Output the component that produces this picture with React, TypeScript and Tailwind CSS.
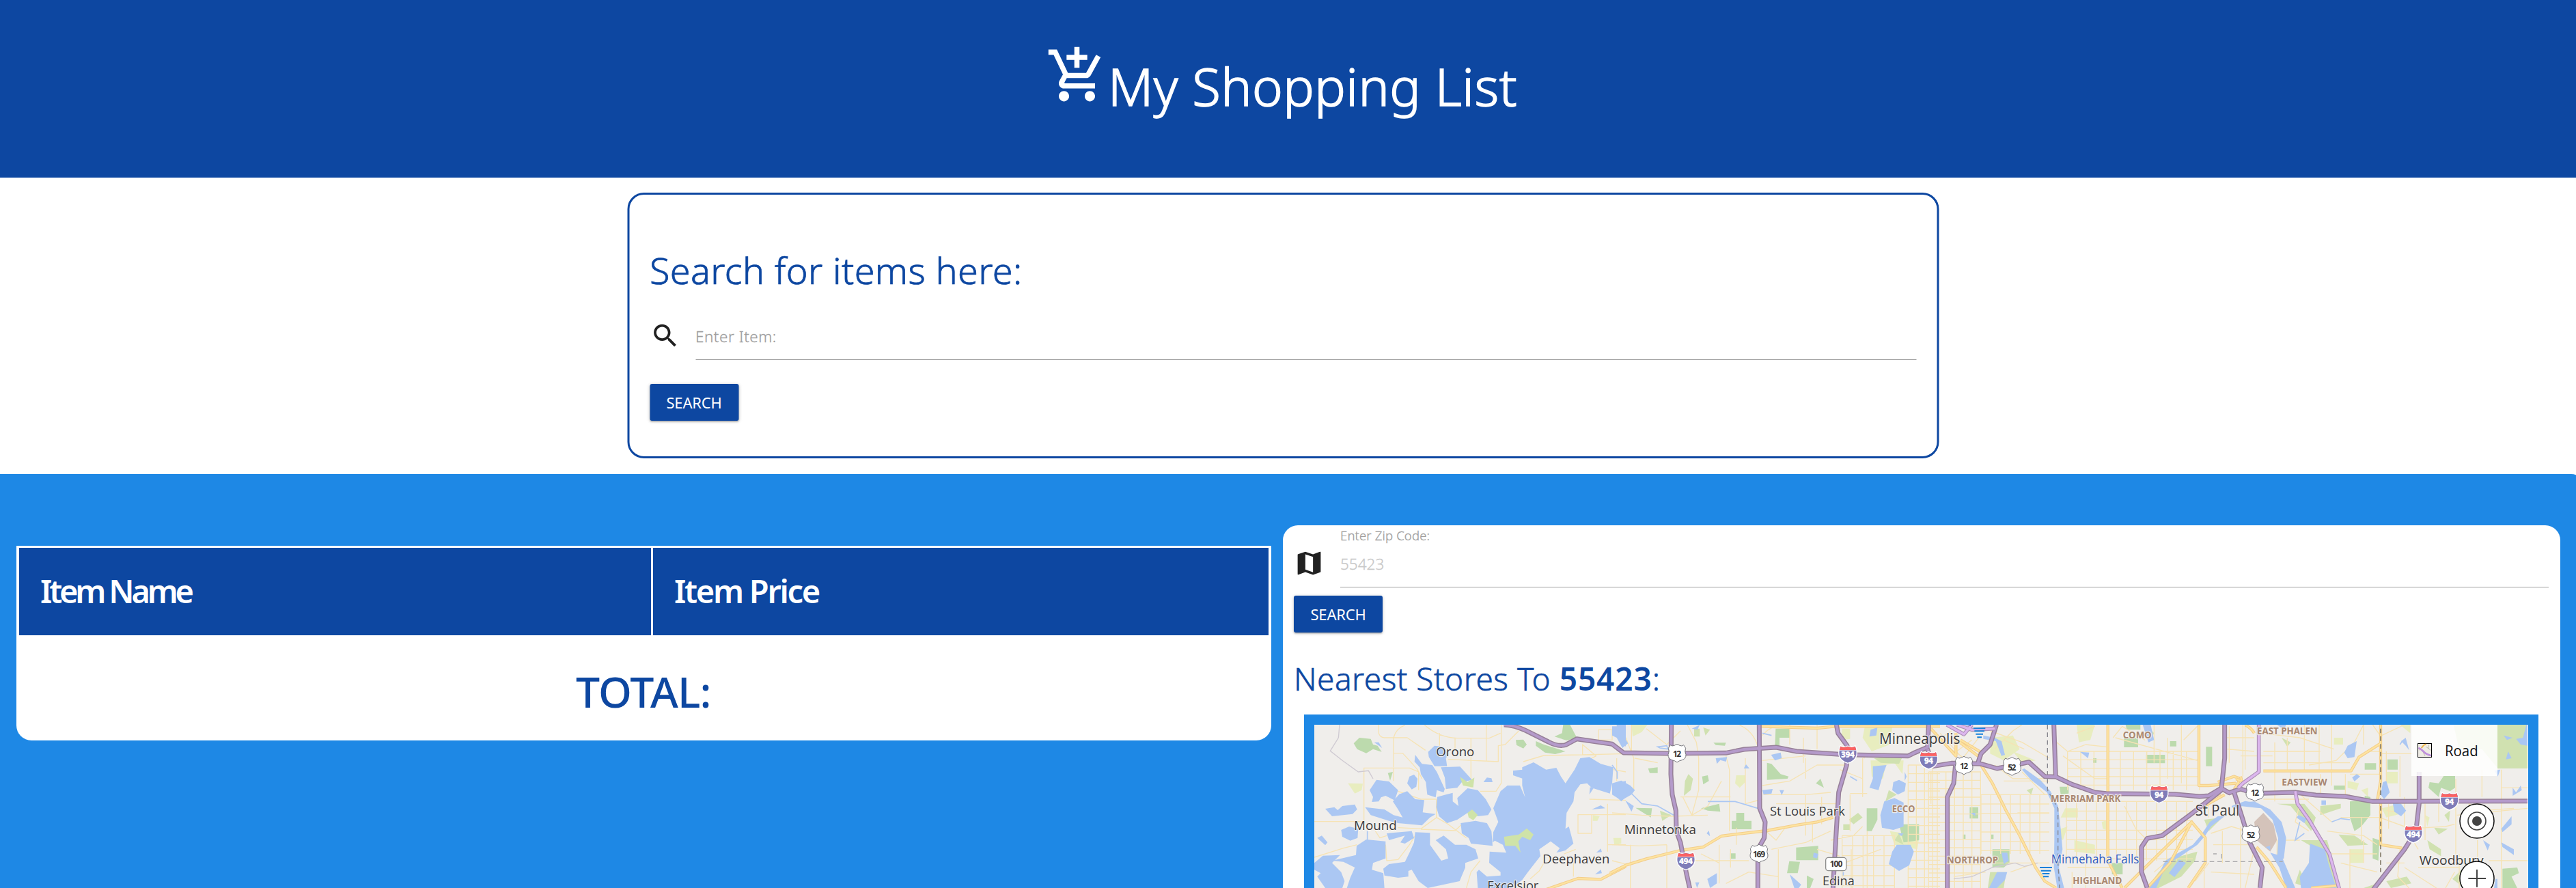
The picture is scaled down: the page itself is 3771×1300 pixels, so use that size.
import React from "react";

const FONT = "font-['Noto_Sans','Open_Sans',sans-serif]";

function grid(x0: number, x1: number, dx: number, y0: number, y1: number, dy: number) {
  let d = "";
  for (let x = x0; x <= x1; x += dx) d += `M${x} ${y0}V${y1}`;
  for (let y = y0; y <= y1; y += dy) d += `M${x0} ${y}H${x1}`;
  return d;
}

type Tile = {
  x: number;
  pale: string;
  green: string;
  lime: string;
  minor: string;
  water: string;
  streams: string;
  yellow: string;
  gray?: string;
};

const tiles: Tile[] = [
  {
    x: 0,
    pale: "M220 350L285 352 280 380 250 395ZM1295 490L1325 495 1315 515 1295 515ZM1390 600L1415 590 1410 620 1390 620Z",
    green:
      "M245 175L270 150 320 155 330 180 350 185 368 212 330 200 300 218 260 200ZM1127 145L1160 130 1165 93 1195 93 1225 150 1180 162ZM1045 165L1080 180 1175 210 1130 222 1085 215 1045 185ZM957 160L990 158 1005 180 990 197 960 182ZM395 305l22 -5 -12 38Z",
    lime: "",
    minor:
      "M355 93V130Q360 148 380 150H480L560 205M420 280V150Q430 110 470 95M555 93Q620 150 700 152H840L890 130M622 130V185M690 150V200M760 150V370M827 93V255M893 93V350L870 385H800M420 218H460L490 250 525 290 545 330M290 520V283H490L530 300V380M72 518H290M420 283V340M650 375L720 340M660 245L880 255V185L910 180 970 120M440 385L540 420H608V500L660 530 740 590M440 545L540 550 610 500M540 552L690 558 720 530M72 675L200 635 260 620M385 620L390 690 440 685 490 620 515 580M340 560L360 590 390 580M990 290V350M990 255L1080 228 1250 225 1440 220M1250 225V180L1310 230 1270 250M1320 115H1380V160H1320ZM1400 240V340M1385 290L1440 300M1230 488H1290V570H1230ZM1290 488H1440M1360 440V650M1280 420L1440 425M1360 620H1440M740 810L760 740 800 690M1020 770L1060 735 1080 700M1210 700V760M1170 660L1220 640",
    water:
      "M600 185L640 190 660 225 650 240 655 275 600 275 575 235 572 212ZM515 225L545 265 590 270 610 300 645 375 640 390 610 380 605 412 568 400 562 345 540 310 535 280 512 255ZM628 280L712 277 765 335 720 345 700 370 650 375 645 325ZM612 410L650 400 680 392 680 430 705 450 700 415 745 372 790 380 825 420 850 465 835 490 790 495 745 480 700 510 655 525 620 495 608 455ZM490 320L510 312 525 330 520 365 500 377 480 350ZM315 380L345 335 400 342 440 380 425 425 385 405 365 412 355 430 325 432 330 410ZM417 430L445 398 480 385 515 420 555 424 548 478 605 485 580 500 545 535 440 525 400 515 320 490 295 455 380 465 420 490 460 500 440 465ZM120 462L160 455 175 468 195 450 250 443 260 465 240 485 150 495ZM190 555L225 540 265 550 262 590 230 602 195 585ZM85 590l20 -10 25 30 -10 12ZM715 525L780 515 830 525 850 560 855 625 760 615 750 590 720 570ZM985 280L1035 258 1090 290 1135 282 1155 320 1175 350 1215 290 1240 240 1280 235 1330 265 1385 280 1380 350 1370 395 1290 370 1270 350 1240 355 1215 390 1210 430 1180 480 1175 550 1190 540 1210 615 1175 645 1135 655 1150 635 1110 605 1060 640 1065 670 1010 740 985 775 940 810 790 810 785 740 795 730 830 760 890 755 890 740 840 700 842 650 915 655 900 620 865 602 855 610 858 565 880 520 858 460 890 385 920 360 975 360 998 412 985 360ZM945 295L985 290 988 330 945 315ZM815 345L830 325 850 328 855 345ZM1385 350L1440 340 1440 410 1420 430 1385 395ZM515 565L580 568 580 620 630 690 660 680 650 640 605 600 640 580 690 620 740 620 780 640 792 680 735 700 735 720 710 780 570 810 530 780 500 730 485 735 485 760 440 765 380 755 375 725 400 705 470 695 490 655 510 610ZM258 625L300 597 385 605 385 680 330 700 325 730 375 745 380 810 215 810 230 765 250 720 200 695 150 690 255 665ZM72 700L110 668 185 665 150 700 190 740 205 780 195 810 120 810 85 760 100 745 72 730ZM390 570L500 560 510 590 470 615 450 610 470 580 400 600ZM1290 465L1330 447 1350 460ZM1305 750l25 -20 5 15ZM1310 655l20 -18 5 15ZM1280 400l18 -28 -15 -5ZM1400 93h40v95l-20 -10 -18 -40ZM335 170l20 0 15 25Z",
    streams: "M305 560V600M530 270L560 300",
    yellow: "M1080 820L1230 768 1330 772 1440 715",
    gray: "M183 93L178 150 142 208 195 250 265 300 310 295 330 330",
  },
  {
    x: 1380,
    pale:
      "M85 93H155L130 125 90 145ZM545 315H585V345L560 370 540 350ZM1010 110H1045V155L1005 160ZM1135 250L1280 250 1275 310 1240 260 1200 270 1190 330 1140 320ZM1220 560L1350 580 1340 640 1240 620ZM5 590H40V615L10 620ZM1110 100L1230 105 1220 180 1140 210 1100 150Z",
    green:
      "M718 110H780V150H735V190H715ZM680 260L700 265 740 310 775 320 770 330 680 335ZM525 515H545V480H580V515H612V552H525ZM808 632L905 625V688H808ZM778 692L825 695 815 745 768 745ZM1118 460H1165V510L1140 560H1118ZM158 285L200 280 200 305 165 305ZM390 460L470 440 475 475 420 470ZM103 458L175 460 170 500ZM395 320L420 315 425 340 400 355ZM815 370M895 350L915 330 930 370ZM518 658H542V682H518ZM855 755L885 770 870 810 855 810ZM1260 530H1348V600L1280 610ZM445 172L500 172 495 185 455 182Z",
    lime:
      "M320 340L335 310 355 330 345 380 315 405ZM210 470L260 490 220 515ZM1040 510L1080 480 1100 500 1060 530ZM1015 530H1045V555H1015ZM1150 240L1280 225 1260 265 1180 260ZM1240 600L1260 570 1280 620ZM360 110H385V145H360ZM400 105L430 115 410 140ZM1215 380L1250 400 1200 430Z",
    minor:
      "M0 110L60 150 95 240V380M85 93V215M330 93L370 170 380 240V380M150 110L240 180 300 120M560 95Q620 120 640 190M660 140Q700 90 760 100M500 230L515 290V560M585 240V440L660 420M300 410H520M310 410L350 490 420 450 480 340M380 380L350 490M0 480L130 490 260 495 420 490M660 360L780 340 900 270H1020M665 400H850L960 390M850 400V580M920 410V530M720 440H1000M1045 400V560M1045 395H1120M1100 240V410M1050 200L1110 240M665 550L720 600 760 545M700 640L850 610 960 560M0 620L120 625 240 620M240 620V810M0 690L80 710M80 620V810M350 690H600M470 620V790M390 660L470 700M520 640V720M545 545V620M730 640V810M500 790L600 740 730 760M880 520V610M960 600L1060 580 1100 540M1020 700L1180 640M1050 640V810M1120 560V810M900 640L1000 670M1000 290L1100 330M850 240V330M100 240L200 260M780 93V180M840 150V260M660 250L850 230M900 93V200M" +
      grid(1300, 1440, 36, 270, 810, 38).slice(1) +
      grid(1010, 1240, 46, 580, 810, 44),
    water:
      "M0 100H60L55 150 70 175 45 195 20 150 0 140ZM0 350L40 338 80 360 100 380 85 400 40 425 0 400ZM58 425L95 450 85 475ZM455 240L505 235 500 255 475 248 460 265ZM350 110L385 93 375 115ZM698 225L740 215 745 240 715 250ZM660 380L705 375 700 395 665 400ZM735 380h20l-10 22ZM578 285l10 -18 15 18ZM1135 115L1165 105 1160 140 1130 145ZM1145 275L1205 270 1190 310 1180 345 1170 380 1130 370 1145 330ZM1235 345L1260 335 1290 350 1285 385 1255 400 1230 380ZM1285 300l8 20 -8 20ZM1195 430L1240 415 1280 435 1280 540 1235 555 1185 545 1178 490ZM1250 620L1310 620 1325 650 1305 710 1260 735 1215 705 1230 650ZM1255 570l25 0 -10 12ZM418 770L460 745 460 790 430 810ZM365 785l18 0 -10 25ZM780 750L830 795 820 810 800 810ZM885 655L905 660 900 680 882 675ZM415 570l10 -12 5 25Z",
    streams: "M80 390L130 440 200 450 270 490M420 430L540 430 640 460M200 190L240 185 245 200 210 195ZM1045 320L1075 338M0 270L22 300 22 330M1015 740V755M660 130L700 140",
    yellow: "M-10 745L60 710 150 682 300 645 400 630 480 582 540 574 680 558 820 532 900 520 970 500M655 100L900 108 980 100 1440 100",
  },
  {
    x: 2760,
    pale:
      "M660 93H740L720 160 670 170ZM610 460H665V500H590ZM770 520L800 510 790 555 775 550ZM280 150L380 140 410 200 340 250 280 220ZM650 600L740 620 740 660 650 650ZM560 560L620 540 600 600ZM380 210L480 250 420 260Z",
    green:
      "M868 150H930V192H868ZM190 455H228V505H190ZM290 640H365V700L340 720H290ZM585 365H625V395L590 400ZM815 700H862V750H815ZM965 225H1048V262H965ZM1228 190H1255V275H1228ZM1070 165H1098V188H1070ZM875 93H940V115H880ZM160 575l12 0v20l-12 0ZM283 575l12 0v20l-12 0ZM732 240h15v20h-15Z",
    lime:
      "M280 740L350 740 340 810 270 810ZM1080 680L1190 650 1180 690 1120 760 1020 810 970 810 1020 740ZM1220 510L1300 500 1240 560ZM960 90L1000 130 980 170ZM440 380L470 370 460 400Z",
    minor:
      grid(10, 240, 38, 300, 810, 37) +
      grid(240, 540, 43, 400, 660, 41) +
      grid(615, 1170, 44, 430, 690, 42) +
      grid(620, 1200, 58, 210, 380, 37) +
      "M820 150L860 100 960 160M600 230L740 330 800 330M820 210H1190M830 150L1190 250M1000 93V260M1060 150V330M1120 93V350M1190 100L1130 160M870 450L920 550 960 590M280 120L420 170 540 240M300 200L380 120 420 93M340 160L430 200M560 160L620 210 700 180 790 190M660 130L740 100M420 300L520 400M20 300V440M300 270L380 330H520M340 340H540M400 480H540M100 700H540M120 760L260 740M370 740L480 700M640 740V810M700 690V810M620 720H820M1240 430V500M1250 570L1340 540 1440 570M1260 620H1440M1220 640V810M1300 560V700M1380 540V810M1250 740L1440 750M1330 100V260M1390 93V320M1320 150H1440M1320 200L1440 210M1000 740L1060 690M1180 780L1240 700M20 180L110 120M60 130L150 230M120 220L200 160M160 240L230 150M80 180L180 250",
    water:
      "M250 140L300 150 330 165 345 225 330 230 305 165 250 155ZM430 285L500 335 545 385 578 450 590 550 598 640 582 720 605 810 575 810 560 720 562 600 562 460 530 390 460 335 420 290ZM330 655L355 655 362 690 340 705ZM310 740L355 740 345 775 310 810 275 810ZM1280 495L1245 520 1205 580 1170 620 1090 665 1050 690 1010 770 980 810 1010 810 1045 730 1065 700 1110 675 1190 620 1225 580 1250 540 1310 495ZM675 212L715 215 710 240ZM1110 685L1140 700 1090 762 1065 745ZM950 93H985L1000 160 975 170ZM170 93H200L190 105ZM195 480l20 0v15ZM1340 450L1400 428 1440 435 1440 448 1400 445 1350 465Z",
    streams: "M575 720L600 810M1390 435L1440 445",
    yellow:
      "M797 93V690L860 810M240 270L290 350 350 470 410 580 480 720 520 780 570 810M1197 93V360H1240L1360 350M970 810L1070 700 1165 520 M870 810L930 750 1165 520L1225 590V700L1150 810M20 110L130 230 130 130M120 150L240 240M150 160L250 220M1280 345L1350 320 1380 330 1350 380M1225 430L1290 395M1220 450L1310 400M1400 93Q1430 110 1440 130",
    gray: "M120 770L200 760 290 720 390 700 430 715 490 700",
  },
  {
    x: 4140,
    pale:
      "M640 300H690V350H640ZM470 340L520 350 510 380 470 370ZM810 490L830 500 820 540ZM530 380L560 370 560 410ZM410 150H450V180H410ZM480 640H540V700H480ZM620 460L700 440 720 480 640 500ZM700 93H745V130Z",
    green:
      "M892 318H942V370L920 385 880 370 870 410 825 370 830 345 870 350ZM545 262H595V290H545ZM480 430L545 425 545 405 570 410 570 490 530 540 500 560 480 500ZM580 590L610 600 605 690 580 680ZM1150 725L1215 720 1222 745 1190 760 1215 810 1150 810ZM645 245H690V290H645ZM410 360h50v18h-50Z",
    lime:
      "M935 93H1260V285L1130 285 1060 200 960 200ZM265 600L380 600 400 670 430 810 370 810 350 660 300 620ZM430 575L500 580 560 620 470 625ZM350 450L440 440 440 460 350 490ZM160 440L280 440 330 500 310 560 220 450ZM820 600L880 640 880 670 830 640ZM850 545L910 550 870 575ZM895 490L920 470 915 520ZM540 810L600 790 590 810ZM640 780L730 760 750 790 660 810ZM180 150L220 170 205 190ZM740 590L790 600 760 610ZM930 770L980 720 970 800ZM260 730L240 790 300 810Z",
    minor:
      "M0 230H140M20 93V290M150 170V430M205 150V290M280 93V300M345 93V290M100 260H480M95 130L260 150 410 200M400 93V360M100 210H350M300 270L420 250 500 170 540 93M220 290V360M100 420H300M350 310V400H480M460 310V400M540 93V180M620 140L720 93M620 150L580 93M560 210H620M480 310H610M620 220H760M640 210V400M700 230V410M720 410V550M640 470L720 480M440 500H610M530 500V610M610 500L720 540 780 640M380 560L540 580 600 620M400 660H600M480 640V810M540 600V700M440 700L600 740M700 640L690 760 740 810M720 550L900 540 940 530M810 440V600M870 440V520M945 330V660M950 490L1260 460M1145 290V810M1145 370H1260M1060 290V410M1000 440L1060 470 1200 460M1090 690H1260M780 720H960M720 720L860 810M900 810L940 740M960 660V810M1040 600V700M640 700H720M160 600V700M260 440L240 520 300 560M60 640L20 810M240 380L400 520M180 600L260 600M650 440V550",
    water:
      "M0 435L60 430 130 465 180 520 200 590 190 680 160 690 165 590 140 510 90 460 0 450ZM130 655L180 670 240 810 200 810 170 720ZM305 615L370 640 385 700 420 810 265 810 260 760 300 700ZM455 215L470 185 510 165 500 235 470 240ZM490 325L510 310 525 320 500 342ZM625 345L640 340 655 390 630 420 615 400ZM668 435L705 440 727 470 705 495 675 475ZM255 490L290 505 280 525 245 500ZM355 425h20v20h-20ZM1260 93H1255L1240 150 1210 155 1230 180 1260 185ZM1155 140L1195 150 1170 160ZM1165 245l10 -35 15 30ZM705 165l20 -15 15 55 -15 -20ZM1115 295l25 -5 -10 30ZM1195 370l15 20 20 -30 5 20 -40 25ZM1145 550L1190 495 1190 530 1150 565ZM1145 610L1200 640 1200 665 1150 630ZM1065 600L1095 620 1085 645ZM110 630L130 625 130 645ZM160 93L200 93 190 115ZM1120 770l8 0 0 40 -15 0Z",
    streams: "M260 520L240 600 280 570M400 520L440 505 480 510M710 165L700 180",
    yellow:
      "M-20 330L0 340M100 296H485L520 235 615 175M615 93V340L600 430M615 430V620L710 635M70 630L130 700 200 810M310 810L420 800M0 320L10 360",
  },
];

const highways = [
  "M905 93Q950 95 1000 118L1100 168Q1140 190 1175 182L1225 155 1380 178 1430 216 1620 219 1880 217 1960 201 2100 192 2190 210 2400 224 2680 230 2710 215 2765 192 2770 93",
  "M1640 93L1638 310 1644 400 1660 470 1662 560 1680 610 1705 740 1725 830",
  "M2026 93L2028 460 2052 520 2048 590 2020 640V810",
  "M2365 93L2372 130 2412 185 2410 270 2375 390 2362 600 2350 810",
  "M2765 200L2790 275 2870 262 3000 265 3070 285 3150 270 3210 257 3280 320 3330 322 3400 355 3500 390 3550 395 3850 398 3960 408 4000 405 4055 372 4090 392 4140 375",
  "M3068 93L3040 180 3000 220 2985 265",
  "M3320 93L3328 325",
  "M2888 270L2880 350 2852 410V810",
  "M4070 93L4070 240 4055 380 3930 480 3795 580 3730 592 3705 630 3705 740 3730 810",
  "M4110 385L4150 510 4180 610 4235 720 4225 810",
  "M4140 375L4200 395 4380 390 4470 402 4600 408 4720 430 5400 428",
  "M4924 300L4924 440 4910 560 4860 640 4720 820",
];
const pinkRoads = [
  "M4220 93V300L4150 350 4130 370",
  "M4380 385L4390 440 4440 510 4530 660 4575 820",
  "M2850 93L2925 135 2960 93M2895 93L2960 115 3060 110",
];

function Us({ x, y, n }: { x: number; y: number; n: string }) {
  return (
    <g transform={`translate(${x} ${y})`}>
      <path
        d="M-29 -36Q-21 -29 -12 -34L0 -40 12 -34Q21 -29 29 -36L38 -22Q32 -8 39 6Q40 24 22 30Q8 33 0 40Q-8 33 -22 30Q-40 24 -39 6Q-32 -8 -38 -22Z"
        fill="#fff" stroke="#77777d" strokeWidth="3"
      />
      <text y="17" textAnchor="middle" fontSize="36" fontWeight="700" fill="#333" textLength={n.length * 18}>{n}</text>
    </g>
  );
}

function Interstate({ x, y, n }: { x: number; y: number; n: string }) {
  return (
    <g transform={`translate(${x} ${y})`}>
      <path d="M-33 -37Q-20 -28 0 -36Q20 -28 33 -37Q42 -18 39 4Q34 30 0 40Q-34 30 -39 4Q-42 -18 -33 -37Z" fill="#7f7cb8" stroke="#fff" strokeWidth="4" />
      <path d="M-32 -34Q-20 -26 0 -33Q20 -26 32 -34L37 -17H-37Z" fill="#fb6262" />
      <path d="M-38 -16H38" stroke="#fff" strokeWidth="2" />
      <text y="16" textAnchor="middle" fontSize="36" fontWeight="800" fill="#fff" textLength={n.length * 20}>{n}</text>
    </g>
  );
}

type Label = [string, number, number, number, string];
const cities: Label[] = [
  ["Orono", 607, 232, 168, "57"],
  ["Mound", 246, 556, 188, "57"],
  ["Deephaven", 1075, 701, 294, "57"],
  ["Excelsior", 832, 820, 225, "57"],
  ["Minnetonka", 1433, 573, 316, "57"],
  ["St Louis Park", 2073, 491, 330, "57"],
  ["Minneapolis", 2553, 178, 355, "64"],
  ["Edina", 2304, 798, 140, "57"],
  ["St Paul", 3941, 491, 194, "64"],
  ["Woodbury", 4925, 708, 282, "57"],
];
const districts: Label[] = [
  ["ECCO", 2609, 477, 101, "40"],
  ["COMO", 3623, 153, 126, "40"],
  ["MERRIAM PARK", 3306, 432, 307, "40"],
  ["NORTHROP", 2850, 702, 225, "40"],
  ["HIGHLAND", 3403, 792, 216, "40"],
  ["EAST PHALEN", 4212, 135, 266, "40"],
  ["EASTVIEW", 4321, 360, 199, "40"],
];

function StoreMap() {
  return (
    <svg viewBox="72 93 5328 717" className="block h-[239px] w-[1776px] bg-[#f0eeeb]" fontFamily="'Open Sans', 'Noto Sans', sans-serif">
      <path d="M4200 520L4240 480 4285 530 4300 600 4270 650 4210 600Z" fill="#d4c3ba" />
      {tiles.map((t) => (
        <g key={t.x} transform={`translate(${t.x} 0)`}>
          <path d={t.pale} fill="#e8edbf" />
          <path d={t.lime} fill="#d0e1b0" />
          <path d={t.green} fill="#bcdaad" />
          <path d={t.minor} fill="none" stroke="#f6e3b4" strokeWidth="4" strokeLinejoin="round" />
        </g>
      ))}
      {tiles.map((t) => (
        <g key={t.x} transform={`translate(${t.x} 0)`}>
          <path d={t.water} fill="#abc7f3" />
          <path d={t.streams} fill="none" stroke="#abc7f3" strokeWidth="5" />
          {t.gray && <path d={t.gray} fill="none" stroke="#cfcad2" strokeWidth="4" />}
        </g>
      ))}
      <path d="M905 585L970 575 1005 548 1035 575 1020 600 985 585 968 605 978 655 955 625 910 625ZM712 322L745 345 775 325 770 368 725 360ZM745 480L765 465 790 490 770 512 750 500Z" fill="#cfe3a8" />
      {tiles.map((t) => (
        <g key={t.x} transform={`translate(${t.x} 0)`} fill="none" strokeLinejoin="round">
          <path d={t.yellow} stroke="#f3cd8a" strokeWidth="13" />
          <path d={t.yellow} stroke="#fde3a0" strokeWidth="7" />
        </g>
      ))}
      <path d="M3292 93V380L3338 460V700L3345 810" fill="none" stroke="#85858c" strokeWidth="4" strokeDasharray="20 14" />
      <path d="M3800 694H4325M4020 660H4035M4057 660V680" fill="none" stroke="#a9a9ab" strokeWidth="4" strokeDasharray="20 14" />
      <path d="M4755 110V740" fill="none" stroke="#857d6b" strokeWidth="5" strokeDasharray="20 14" />
      <g fill="none" strokeLinejoin="round">
        {highways.map((d) => <path key={d} d={d} stroke="#978099" strokeWidth="21" />)}
        {highways.map((d) => <path key={d} d={d} stroke="#b49aca" strokeWidth="12" />)}
        {pinkRoads.map((d) => <path key={d} d={d} stroke="#ae91b8" strokeWidth="17" />)}
        {pinkRoads.map((d) => <path key={d} d={d} stroke="#dcb6ee" strokeWidth="10" />)}
      </g>

      <Us x={1665} y={218} n="12" />
      <Us x={2025} y={659} n="169" />
      <Us x={2925} y={272} n="12" />
      <Us x={3136} y={276} n="52" />
      <Us x={4203} y={389} n="12" />
      <Us x={4185} y={573} n="52" />
      <Interstate x={2415} y={222} n="394" />
      <Interstate x={2770} y={248} n="94" />
      <Interstate x={1704} y={690} n="494" />
      <Interstate x={3782} y={397} n="94" />
      <Interstate x={5057} y={428} n="94" />
      <Interstate x={4899} y={572} n="494" />
      <rect x="2318" y="676" width="90" height="58" rx="12" fill="#fff" stroke="#8c8c8c" strokeWidth="4" />
      <text x="2364" y="718" textAnchor="middle" fontSize="36" fontWeight="700" fill="#3a3a3a" textLength="56">100</text>

      <g paintOrder="stroke" stroke="#f4f2ee" strokeOpacity="0.85" strokeWidth="7" strokeLinejoin="round">
        {districts.map(([s, x, y, w, f]) => (
          <text key={s} x={x} y={y} fontSize={f} fontWeight="700" fill="#a98770" textLength={w} lengthAdjust="spacingAndGlyphs">{s}</text>
        ))}
        {cities.map(([s, x, y, w, f]) => (
          <text key={s} x={x} y={y} fontSize={f} fill="#3b3b3d" textLength={w} lengthAdjust="spacingAndGlyphs">{s}</text>
        ))}
        <text x="3308" y="702" fontSize="53" fill="#2f5bc0" textLength="386" lengthAdjust="spacingAndGlyphs">Minnehaha Falls</text>
      </g>
      <g stroke="#1580da" strokeWidth="6">
        <path d="M2967 109h52M2971 121h44M2977 134h32M2983 148h20" />
        <path d="M3258 720h54M3263 734h44M3269 747h32M3273 760h24" />
      </g>
      <path d="M2943 97l12 -4 0 5z" fill="#2f5bc0" />

      <rect x="4890" y="93" width="378" height="225" fill="#fff" fillOpacity="0.86" />
      <rect x="4918.5" y="175.500" width="60" height="60" fill="#eeebe4" stroke="#000" strokeWidth="3" />
      <path d="M4925 205L4940 185 4955 180M4950 230L4940 210M4955 190L4975 205M4965 180V200" fill="none" stroke="#b9b9a8" strokeWidth="3" />
      <path d="M4935 195L4945 182 4955 178" fill="none" stroke="#f5b53d" strokeWidth="5" />
      <path d="M4921 195Q4935 200 4945 212T4977 228" fill="none" stroke="#bf8fdc" strokeWidth="8" />
      <text x="5037" y="231" fontSize="67" fill="#111" textLength="146" lengthAdjust="spacingAndGlyphs">Road</text>

      <circle cx="5178" cy="516" r="75" fill="#fff" stroke="#0d0d0d" strokeWidth="4.500" />
      <circle cx="5178" cy="516" r="39" fill="none" stroke="#444" strokeWidth="5" />
      <circle cx="5178" cy="516" r="21" fill="#444" />
      <circle cx="5178" cy="768" r="75" fill="#fff" stroke="#0d0d0d" strokeWidth="4.500" />
      <path d="M5140 768H5217M5178 729V806" stroke="#444" strokeWidth="6" />
    </svg>
  );
}

function SearchButton() {
  return (
    <button className="flex h-[54px] w-[130px] items-center justify-center rounded-[3px] bg-[#0d47a1] text-[22px] font-normal tracking-[-0.200px] text-white shadow-[0_2px_2px_0_rgba(0,0,0,0.14),0_3px_1px_-2px_rgba(0,0,0,0.12),0_1px_5px_0_rgba(0,0,0,0.2)]">
      SEARCH
    </button>
  );
}

export default function App() {
  return (
    <div className={`h-[1300px] w-[3771px] overflow-hidden bg-white ${FONT}`}>
      <header className="flex h-[260px] items-start bg-[#0d47a1] pl-[1531px] pt-[65px] text-white">
        <svg viewBox="0 0 24 24" className="size-[91px]" fill="currentColor">
          <path d="M11 9h2V6h3V4h-3V1h-2v3H8v2h3v3zm-4 9c-1.100 0-1.990.9-1.990 2S5.900 22 7 22s2-.9 2-2-.9-2-2-2zm10 0c-1.100 0-1.990.9-1.990 2s.89 2 1.990 2 2-.9 2-2-.9-2-2-2zm-9.830-3.250l.03-.12.9-1.630h7.450c.75 0 1.410-.41 1.750-1.030l3.860-7.010L19.420 4h-.01l-1.100 2-2.760 5H8.530l-.13-.27L6.160 6l-.95-2-.94-2H1v2h2l3.600 7.590-1.350 2.450c-.16.28-.25.61-.25.96 0 1.100.9 2 2 2h12v-2H7.420c-.13 0-.25-.11-.25-.25z" />
        </svg>
        <h1 className="mt-[22px] whitespace-nowrap text-[76px] font-light leading-[78px] tracking-[0.500px] [-webkit-text-stroke:1.500px_white]">My Shopping List</h1>
      </header>

      <main>
        <section className="mx-auto mt-[22px] h-[389px] w-[1920px] translate-x-[-7.500px] rounded-[24px] border-[3px] border-[#0d47a1] px-[30px] pt-[80px]">
          <h2 className="whitespace-nowrap text-[54px] font-light leading-[60px] tracking-[0.350px] text-[#0d47a1] [-webkit-text-stroke:0.700px_#0d47a1]">Search for items here:</h2>
          <div className="mt-[44px] flex">
            <svg viewBox="0 0 24 24" className="size-[45px]" fill="#212121">
              <path d="M15.500 14h-.79l-.28-.27C15.410 12.590 16 11.110 16 9.500 16 5.910 13.090 3 9.500 3S3 5.910 3 9.500 5.910 16 9.500 16c1.610 0 3.090-.59 4.230-1.570l.27.28v.79l5 4.990L20.490 19l-4.990-5zm-6 0C7.010 14 5 11.990 5 9.500S7.010 5 9.500 5 14 7.010 14 9.500 11.990 14 9.500 14z" />
            </svg>
            <div className="ml-[22px] h-[58px] w-[1787px] border-b border-[#9e9e9e] pt-[8px] text-[22.500px] font-light leading-[32px] tracking-[0.500px] text-[#9e9e9e] [-webkit-text-stroke:0.300px_#9e9e9e]">Enter Item:</div>
          </div>
          <div className="mt-[35px]"><SearchButton /></div>
        </section>

        <section className="mt-[23px] flex h-[620px] w-[3786px] items-start rounded-tr-[22px] bg-[#1e88e5] pl-[24px]">
          <div className="mt-[105px] h-[285px] w-[1837px] rounded-b-[22px] bg-white px-[4px] pt-[3px]">
            <div className="flex h-[128px] gap-[3px] text-[47px] font-semibold leading-[126px] text-white">
              <div className="w-[925px] bg-[#0d47a1] pl-[31px] tracking-[-4.200px]">Item Name</div>
              <div className="flex-1 bg-[#0d47a1] pl-[31px] tracking-[-2.300px]">Item Price</div>
            </div>
            <div className="pl-[815px] pt-[40px] text-[62.500px] font-medium leading-[84px] tracking-[-0.900px] text-[#0d47a1]">TOTAL:</div>
          </div>

          <div className="ml-[17px] mt-[75px] h-[545px] w-[1870px] rounded-t-[22px] bg-white pl-[16px] pt-[3px]">
            <div className="flex">
              <svg viewBox="0 0 24 24" className="mt-[30px] size-[45px]" fill="#212121">
                <path d="M20.500 3l-.16.03L15 5.100 9 3 3.360 4.900c-.21.07-.36.25-.36.48V20.500c0 .28.22.5.5.5l.16-.03L9 18.900l6 2.100 5.640-1.900c.21-.07.36-.25.36-.48V3.500c0-.28-.22-.5-.5-.5zM15 19l-6-2.110V5l6 2.110V19z" />
              </svg>
              <div className="ml-[23px] h-[88px] w-[1769px] border-b border-[#9e9e9e]">
                <div className="text-[18.500px] font-light leading-[24px] tracking-[0.150px] text-[#9e9e9e] [-webkit-text-stroke:0.300px_#9e9e9e]">Enter Zip Code:</div>
                <div className="mt-[14px] text-[22.500px] font-light leading-[32px] text-[#c8c8c8] [-webkit-text-stroke:0.300px_#c8c8c8]">55423</div>
              </div>
            </div>
            <div className="mt-[12px]"><SearchButton /></div>
            <h3 className="mt-[38px] whitespace-nowrap text-[46px] font-light leading-[58px] tracking-[0.500px] text-[#0d47a1] [-webkit-text-stroke:0.600px_#0d47a1]">
              Nearest Stores To <b className="font-semibold tracking-[0.900px] [-webkit-text-stroke:0]">55423</b>:
            </h3>
            <div className="ml-[15px] mt-[24px] w-[1807px] border-[15px] border-[#1e88e5] bg-white">
              <StoreMap />
            </div>
          </div>
        </section>
      </main>
    </div>
  );
}
